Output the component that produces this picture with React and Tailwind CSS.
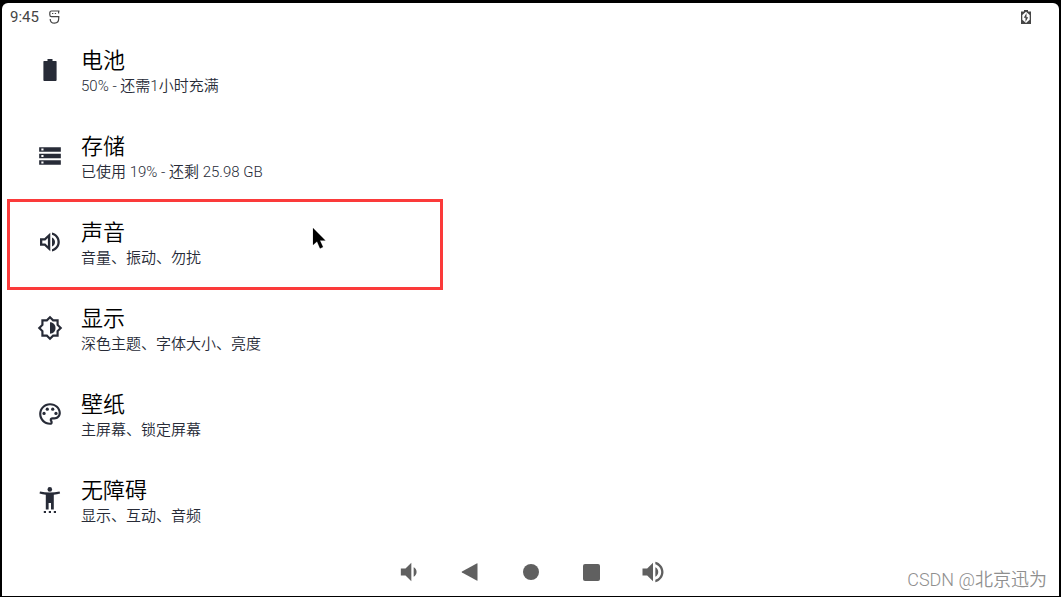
import React from 'react';
import { MdStorage, MdOutlinePalette, MdVolumeDown, MdVolumeUp } from 'react-icons/md';

function BatteryIcon({ size, className }) {
    return (
        <svg width={size} height={size} viewBox="0 0 26 26" fill="currentColor" className={className} aria-hidden="true">
            <path d="M10.5 2h5v2H19q.6 0 .6.6V23q0 1-.9 1H7.2q-.8 0-.8-1V4.6q0-.6.6-.6h3.5z" />
        </svg>
    );
}

function SoundIcon({ size, className }) {
    return (
        <svg width={size} height={size} viewBox="0 0 26 26" fill="currentColor" className={className} aria-hidden="true">
            <path fillRule="evenodd" d="M3 9.3h4.4L13.3 3.8v18.4l-5.9-5.5H3zM5.3 11.5v3h3l2.6 2.4V9.1l-2.6 2.4z" />
            <path d="M15 8.4c2 .9 3 2.6 3 4.6s-1 3.7-3 4.6z" />
            <path d="M15 3.4c4.7 1.1 7.8 5 7.8 9.6s-3.1 8.5-7.8 9.6v-2.4c3.3-1 5.5-3.900 5.500-7.200s-2.200-6.200-5.500-7.200z" />
        </svg>
    );
}

function DisplayIcon({ size, className }) {
    return (
        <svg width={size} height={size} viewBox="0 0 24 24" fill="currentColor" className={className} aria-hidden="true">
            <path
                fillRule="evenodd"
                d="M20 8.69V4h-4.690L12 .69 8.690 4H4v4.690L.69 12 4 15.310V20h4.690L12 23.310 15.310 20H20v-4.690L23.310 12zM18 14.480V18h-3.520L12 20.480 9.520 18H6v-3.520L3.520 12 6 9.520V6h3.520L12 3.520 14.480 6H18v3.520L20.480 12z"
            />
            <path d="M12 6.700c3 0 5.100 2.400 5.100 5.300s-2.100 5.300-5.100 5.300z" />
        </svg>
    );
}

function AccessibilityIcon({ size, className }) {
    return (
        <svg width={size} height={size} viewBox="0 0 26 26" fill="currentColor" className={className} aria-hidden="true">
            <circle cx="12.800" cy="2.400" r="2.300" />
            <path d="M3 4.600c3.200.7 6.400 1 9.800 1s6.600-.3 9.800-1l.5 2c-2 .6-4.100.9-6.300 1.100v14.800h-2.800v-6.600h-2.400v6.600H8.800V7.700c-2.200-.2-4.300-.5-6.300-1.100z" />
            <path d="M6.800 24H9v2H6.800zM11.800 24H14v2h-2.200zM16.800 24H19v2h-2.200z" />
        </svg>
    );
}

const settings = [
    { id: 'battery', title: '电池', summary: '50% - 还需1小时充满', Icon: BatteryIcon },
    { id: 'storage', title: '存储', summary: '已使用 19% - 还剩 25.98 GB', Icon: MdStorage },
    { id: 'sound', title: '声音', summary: '音量、振动、勿扰', Icon: SoundIcon, marked: true },
    { id: 'display', title: '显示', summary: '深色主题、字体大小、亮度', Icon: DisplayIcon },
    { id: 'wallpaper', title: '壁纸', summary: '主屏幕、锁定屏幕', Icon: MdOutlinePalette },
    { id: 'accessibility', title: '无障碍', summary: '显示、互动、音频', Icon: AccessibilityIcon },
];

function StatusBar() {
    return (
        <header className="flex h-6 items-center justify-between pl-2 pr-7 pt-1 text-[#454545]">
            <div className="flex items-center gap-[10px]">
                <span className="text-[15px] leading-5">9:45</span>
                <svg width="11" height="14" viewBox="0 0 11 14" fill="none" stroke="currentColor" strokeWidth="1.2" aria-hidden="true">
                    <path d="M10.500 1H2.500C1.400 1 .800 1.800.800 3v1.700c0 1.200.600 1.900 1.700 1.900h7.800" />
                    <path d="M9.600 1v2.600M3 3.500h1.300M5.800 3.500h1.300" />
                    <path d="M9.700 6.600v2.200c0 2.700-1.600 4.300-4.200 4.300S1.200 11.600 1.200 8.900" />
                </svg>
            </div>
            <svg width="10" height="14" viewBox="0 0 10 14" aria-hidden="true">
                <path d="M3 0h4v1.500h3V14H0V1.500h3z" fill="#454545" />
                <path d="M5 1.800 8.700 5v4.800L5 13 1.300 9.800V5z" fill="#fff" />
                <path d="M5.500 3 2.800 7.700h1.700v4.200l2.700-4.700H5.500z" fill="#454545" />
            </svg>
        </header>
    );
}

function Pointer() {
    return (
        <svg className="absolute left-[310px] top-7" width="16" height="24" viewBox="0 0 16 24" aria-hidden="true">
            <path d="M1 1v17l4-3.400 3 6.800 3-1.300-3-6.600h5.400z" fill="#000" stroke="#ddd" strokeWidth="1" paintOrder="stroke" />
        </svg>
    );
}

function SettingRow({ title, summary, Icon, marked }) {
    return (
        <li className="relative">
            <button type="button" className="flex h-[86px] w-full items-center gap-[18px] pl-[35px] text-left">
                <Icon size={26} className="shrink-0 text-[#272b37]" />
                <span className="flex flex-col pt-1 font-[350]">
                    <span className="text-[22px] leading-7 text-black">{title}</span>
                    <span className="text-[15px] leading-[22px] text-[#272b37]">{summary}</span>
                </span>
            </button>
            {marked && (
                <>
                    <div className="pointer-events-none absolute -bottom-[5px] left-[5px] top-0 w-[436px] border-3 border-[#fb3a3a]" />
                    <Pointer />
                </>
            )}
        </li>
    );
}

function NavButton({ label, children }) {
    return (
        <button type="button" aria-label={label} className="flex size-7 items-center justify-center">
            {children}
        </button>
    );
}

function NavigationBar() {
    return (
        <footer className="relative flex h-12 items-center justify-center gap-[33px] text-[#606060]">
            <NavButton label="降低音量">
                <MdVolumeDown size={28} />
            </NavButton>
            <NavButton label="返回">
                <svg width="18" height="18" viewBox="0 0 18 18" fill="currentColor" aria-hidden="true">
                    <path d="M16.500 .8v16.400q0 .8-.8.4L1 9.600q-.9-.6 0-1.200L15.700.4q.8-.4.8.4z" />
                </svg>
            </NavButton>
            <NavButton label="主屏幕">
                <span className="size-4 rounded-full bg-current" />
            </NavButton>
            <NavButton label="最近任务">
                <span className="size-[17px] rounded-xs bg-current" />
            </NavButton>
            <NavButton label="提高音量">
                <MdVolumeUp size={28} />
            </NavButton>
            <span className="absolute bottom-0 right-3 text-[18px] font-[350] leading-8 text-[#8f8f8f]">
                CSDN @北京迅为
            </span>
        </footer>
    );
}

function App() {
    return (
        <div className="min-h-screen bg-black px-[2px] pb-px pt-[3px] font-[Roboto,'Noto_Sans_CJK_SC',sans-serif]">
            <div className="flex min-h-[calc(100vh-4px)] flex-col rounded-t-md bg-white">
                <StatusBar />
                <main className="flex-1">
                    <ul>
                        {settings.map((item) => (
                            <SettingRow key={item.id} {...item} />
                        ))}
                    </ul>
                </main>
                <NavigationBar />
            </div>
        </div>
    );
}

export default App;
